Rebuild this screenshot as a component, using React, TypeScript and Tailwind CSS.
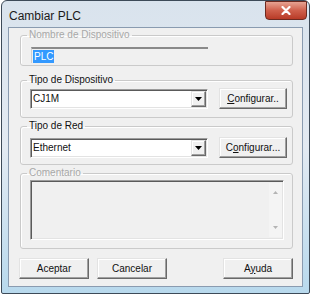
const sunken = "border border-t-[#9c9c9c] border-l-[#9c9c9c] border-b-white border-r-white shadow-[inset_1px_1px_0_#5a5a5a,inset_-1px_-1px_0_#e3e3e3]";
const raised = "border border-t-[#e3e3e3] border-l-[#e3e3e3] border-b-[#696969] border-r-[#696969] shadow-[inset_-1px_-1px_0_#a0a0a0,inset_1px_1px_0_#ffffff] bg-[#f0f0f0]";

const Boton = ({ children, w = "w-[70px]" }: { children: React.ReactNode; w?: string }) => (
    <button className={`${raised} ${w} h-[21px] flex items-center justify-center text-[10px] leading-[12px] text-[#111]`}>
        {children}
    </button>
)

const Combo = ({ valor }: { valor: string }) => (
    <div className={`${sunken} w-[178px] h-[20px] bg-white flex items-center`}>
        <span className="flex-1 pl-[2px] text-[10px] leading-[12px] text-[#111]">{valor}</span>
        <div className={`${raised} w-[15px] h-[16px] mr-[1px] flex items-center justify-center`}>
            <svg width="7" height="4" viewBox="0 0 7 4"><path d="M0 0h7L3.5 4z" fill="#000" /></svg>
        </div>
    </div>
)

const App = () => {
    return (
        <div className="w-[311px] h-[294px] bg-white" style={{ fontFamily: '"Liberation Sans", Arial, sans-serif' }}>
            <div className="ml-[1px] w-[309px] h-[294px] border border-[#3d4a58] rounded-t-[6px] rounded-b-[2px] bg-gradient-to-b from-[#d9e3ed] via-[#e3eaf2] to-[#b8d9ed] flex flex-col px-[6px] pb-[6px]">
                {/* barra de titulo */}
                <div className="h-[26px] flex items-start">
                    <span className="mt-[8px] ml-[1px] text-[12px] leading-[14px] text-[#1a1a1a]">Cambiar PLC</span>
                    <div className="ml-auto -mr-[4px] w-[42px] h-[19px] rounded-b-[4px] border border-[#6d2a20] bg-gradient-to-b from-[#e6a393] via-[#cf5f4b] to-[#b83a26] flex items-center justify-center">
                        <svg width="10" height="9" viewBox="0 0 10 9">
                            <path d="M1.5 1l7 7M8.5 1l-7 7" stroke="#fff" strokeWidth="2.2" strokeLinecap="round" />
                        </svg>
                    </div>
                </div>

                {/* area cliente */}
                <div className="h-[260px] border border-[#8a9bb0] bg-[#f0f0f0] pl-[11px] pr-[9px] text-[10px] leading-[12px]">
                    <fieldset className="mt-[1px] border border-[#cacaca] rounded-[3px] shadow-[inset_1px_1px_0_#fff]">
                        <legend className="ml-[6px] px-[2px] text-[#a8a8a8]">Nombre de Dispositivo</legend>
                        <div className="pt-[6px] pb-[2px] pl-[10px]">
                            <div className="w-[177px] h-[16px] border-t-2 border-t-[#8a8a8a] border-l border-l-[#d0d0d0] flex items-center pl-[1px]">
                                <span className="bg-[#3399ff] text-white px-[1px] leading-[13px]">PLC</span>
                            </div>
                        </div>
                    </fieldset>

                    <fieldset className="mt-[8px] border border-[#cacaca] rounded-[3px] shadow-[inset_1px_1px_0_#fff]">
                        <legend className="ml-[6px] px-[2px] text-[#111]">Tipo de Dispositivo</legend>
                        <div className="pt-[2px] pb-[8px] pl-[9px] flex items-center">
                            <Combo valor="CJ1M" />
                            <div className="ml-[11px]">
                                <Boton w="w-[68px]"><span><span className="underline">C</span>onfigurar..</span></Boton>
                            </div>
                        </div>
                    </fieldset>

                    <fieldset className="mt-[2px] border border-[#cacaca] rounded-[3px] shadow-[inset_1px_1px_0_#fff]">
                        <legend className="ml-[6px] px-[2px] text-[#111]">Tipo de Red</legend>
                        <div className="pt-[5px] pb-[6px] pl-[9px] flex items-center">
                            <Combo valor="Ethernet" />
                            <div className="ml-[11px]">
                                <Boton w="w-[68px]"><span>C<span className="underline">o</span>nfigurar...</span></Boton>
                            </div>
                        </div>
                    </fieldset>

                    <fieldset className="mt-[2px] border border-[#cacaca] rounded-[3px] shadow-[inset_1px_1px_0_#fff]">
                        <legend className="ml-[6px] px-[2px] text-[#a8a8a8]">Comentario</legend>
                        <div className="pt-[1px] pb-[8px] pl-[9px]">
                            <div className={`${sunken} w-[254px] h-[60px] flex justify-end`}>
                                <div className="w-[13px] my-[2px] mr-[1px] bg-[#f4f4f4] flex flex-col justify-between items-center py-[8px]">
                                    <svg width="5" height="3" viewBox="0 0 5 3"><path d="M0 3h5L2.5 0z" fill="#b4b4b4" /></svg>
                                    <svg width="5" height="3" viewBox="0 0 5 3"><path d="M0 0h5L2.5 3z" fill="#b4b4b4" /></svg>
                                </div>
                            </div>
                        </div>
                    </fieldset>

                    <div className="mt-[9px] -ml-[1px] flex">
                        <Boton>Aceptar</Boton>
                        <div className="ml-[8px]"><Boton>Cancelar</Boton></div>
                        <div className="ml-auto"><Boton><span>A<span className="underline">y</span>uda</span></Boton></div>
                    </div>
                </div>
            </div>
        </div>
    )
}

export default App
